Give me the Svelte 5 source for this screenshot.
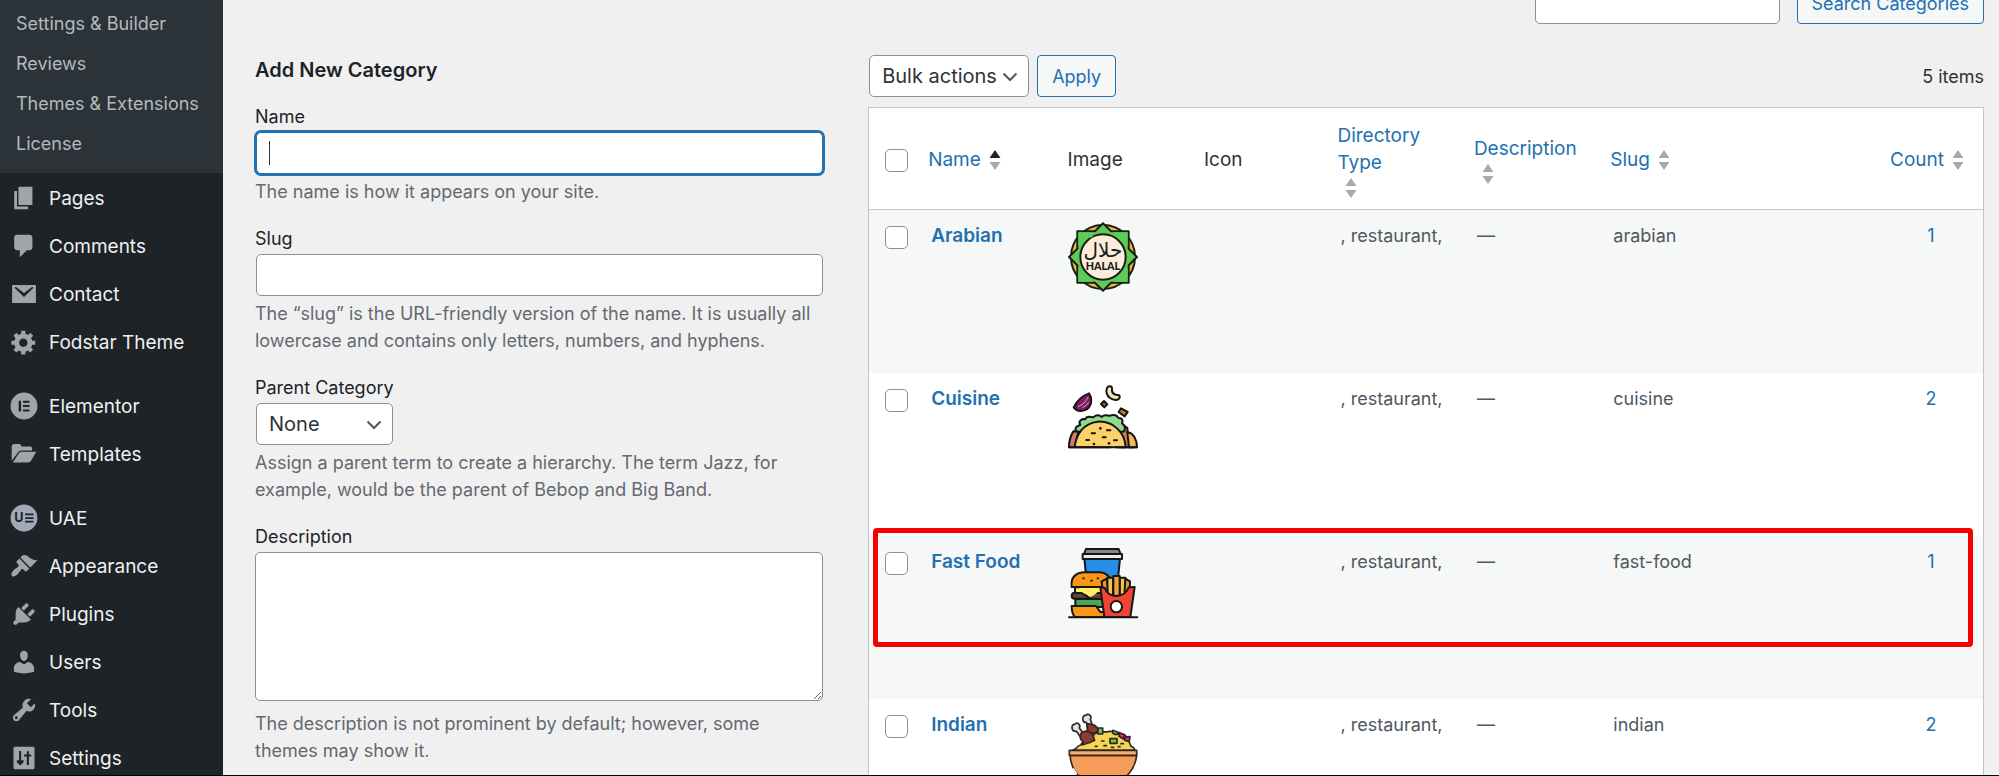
<script lang="ts">
	const submenu = ['Settings & Builder', 'Reviews', 'Themes & Extensions', 'License'];

	const menu = [
		{ label: 'Pages', icon: 'M6 15V2h10v13H6zm-1 1h8v2H3V5h2v11z' },
		{
			label: 'Comments',
			icon: 'M5 2h9c1.1 0 2 .9 2 2v7c0 1.1-.9 2-2 2h-2l-5 5v-5H5c-1.1 0-2-.9-2-2V4c0-1.1.9-2 2-2z'
		},
		{
			label: 'Contact',
			icon: 'M1.5 3.5h17v13h-17zM3.6 5.9l6.4 6.3 6.4-6.3c.5-.6-.3-1.3-.9-.8L10 9.3 4.500 5.100c-.6-.5-1.400.2-.9.8z'
		},
		{
			label: 'Fodstar Theme',
			icon: 'M18 12h-2.180c-.17.7-.44 1.350-.81 1.930l1.540 1.540-2.100 2.100-1.540-1.540c-.58.36-1.230.63-1.910.79V19H8v-2.180c-.68-.16-1.330-.43-1.910-.79l-1.540 1.540-2.120-2.120 1.540-1.540c-.36-.58-.63-1.230-.79-1.910H1V9.030h2.170c.16-.7.44-1.350.8-1.940L2.430 5.550l2.100-2.100 1.540 1.540c.58-.37 1.240-.64 1.930-.81V2h3v2.180c.68.16 1.330.43 1.910.79l1.540-1.540 2.120 2.120-1.540 1.540c.36.59.64 1.240.8 1.940H18V12zm-8.500 1.500c1.660 0 3-1.340 3-3s-1.340-3-3-3-3 1.340-3 3 1.340 3 3 3z'
		},
		{
			label: 'Elementor',
			gap: true,
			icon: 'M10 .4a9.600 9.600 0 1 0 0 19.200 9.600 9.600 0 0 0 0-19.200zM6.200 6.200h1.700v7.800H6.200zM9.300 6.200h4.600v1.500H9.300zM9.300 9.300h4.600v1.500H9.300zM9.300 12.500h4.600V14H9.300z'
		},
		{
			label: 'Templates',
			icon: 'M1.200 14.800V4.600c0-1 .7-1.700 1.700-1.700h3.600c1 0 1.600.7 1.600 1.700h6.200c1 0 1.500.6 1.500 1.600v1.300H8.600c-1.600 0-2.500.6-3.300 1.900zM2 16l4.200-6.300c.6-.9 1.300-1.300 2.400-1.300h10.200l-3.700 6.300c-.5.9-1.200 1.300-2.200 1.300z'
		},
		{
			label: 'UAE',
			gap: true,
			logo: true,
			icon: 'M10 .4a9.600 9.600 0 1 0 0 19.200 9.600 9.600 0 0 0 0-19.200zM10.800 6.800h6v1.300h-6zM10.800 9.400h6v1.300h-6zM10.800 12h6v1.300h-6z'
		},
		{
			label: 'Appearance',
			icon: 'M14.480 11.060L7.410 3.990l1.500-1.500c.5-.56 2.300-.47 3.510.32 1.210.8 1.430 1.280 2.910 2.100 1.180.64 2.450 1.260 4.450.85zm-.71.71L6.700 4.700 4.930 6.470c-.39.39-.39 1.020 0 1.410l1.060 1.060c.39.39.39 1.030 0 1.420-.6.6-1.430 1.110-2.210 1.690-.35.26-.7.53-1.010.84C1.430 14.230.4 16.080 1.400 17.070c.99 1 2.840-.03 4.180-1.360.31-.31.58-.66.85-1.020.57-.78 1.080-1.610 1.690-2.210.39-.39 1.020-.39 1.410 0l1.060 1.060c.39.39 1.020.39 1.410 0z'
		},
		{
			label: 'Plugins',
			icon: 'M13.110 4.360L9.870 7.600 8 5.730l3.240-3.240c.35-.34 1.050-.2 1.560.32.52.51.66 1.210.31 1.550zm-8 1.770l.91-1.120 9.010 9.010-1.190.84c-.71.71-2.630 1.160-3.820 1.160H6.140L4.900 17.260c-.59.59-1.540.59-2.120 0-.59-.58-.59-1.530 0-2.120l1.240-1.240v-3.880c0-1.130.4-3.190 1.090-3.890zm7.260 3.970l3.240-3.240c.34-.35 1.040-.21 1.550.31.52.51.66 1.210.31 1.550l-3.240 3.250z'
		},
		{
			label: 'Users',
			icon: 'M10 9.250c-2.270 0-2.730-3.440-2.730-3.440C7 4.020 7.820 2 9.970 2c2.160 0 2.980 2.020 2.710 3.810 0 0-.41 3.440-2.680 3.440zm0 2.570L12.720 10c2.390 0 4.520 2.330 4.520 4.530v2.490s-3.650 1.130-7.240 1.130c-3.650 0-7.240-1.130-7.240-1.130v-2.490c0-2.250 1.940-4.480 4.470-4.480z'
		},
		{
			label: 'Tools',
			icon: 'M16.680 9.770c-1.340 1.340-3.300 1.670-4.950.99l-5.410 6.520c-.99.99-2.590.99-3.580 0s-.99-2.590 0-3.570l6.520-5.420c-.68-1.650-.35-3.610.99-4.950 1.280-1.280 3.120-1.620 4.720-1.060l-2.890 2.890 2.820 2.820 2.860-2.870c.53 1.580.18 3.390-1.080 4.650zM3.810 16.210c.4.39 1.040.39 1.430 0 .4-.4.4-1.040 0-1.430-.39-.4-1.030-.4-1.430 0-.39.39-.39 1.030 0 1.430z'
		},
		{
			label: 'Settings',
			icon: 'M3.500 2h13c.6 0 1 .4 1 1v14c0 .6-.4 1-1 1h-13c-.6 0-1-.4-1-1V3c0-.6.4-1 1-1zM6.500 5v6.600H4.900V13l2.400 2.400L9.700 13v-1.400H8V5zM12 15h1.500V9h1.700V7.500h-1.700V5.600L12.700 4.600 12 5.600v1.900h-2V9h2z'
		}
	];

	const categories = [
		{ name: 'Arabian', slug: 'arabian', count: 1 },
		{ name: 'Cuisine', slug: 'cuisine', count: 2 },
		{ name: 'Fast Food', slug: 'fast-food', count: 1, marked: true },
		{ name: 'Indian', slug: 'indian', count: 2 }
	];

	let name = $state('');
	let slug = $state('');
	let description = $state('');
	let search = $state('');
	let selected: string[] = $state([]);

	function toggleAll(e: Event) {
		selected = (e.currentTarget as HTMLInputElement).checked ? categories.map((c) => c.slug) : [];
	}
</script>

<svelte:head>
	<title>Categories</title>
</svelte:head>

{#snippet chevron()}
	<svg class="chevron" viewBox="0 0 16 16" aria-hidden="true"><path d="M1.500 4.500 8 11l6.500-6.500" /></svg>
{/snippet}

{#snippet sorter(asc = false)}
	<svg class="sorter" viewBox="0 0 12 20" aria-hidden="true">
		<path class:asc d="M6 0l5.500 8H.5z" />
		<path d="M6 20l5.500-8H.5z" />
	</svg>
{/snippet}

{#snippet picture(slug: string)}
	{#if slug === 'arabian'}
		<svg class="picture" viewBox="54 36 210 210" role="img" aria-label="Halal badge">
			<g stroke="#152018" stroke-width="6" stroke-linejoin="round">
				<circle cx="159" cy="141" r="96" fill="#eeb63a" />
				<path d="M82 64h154v154H82z" fill="#5fcb55" />
				<path d="M159 40l102 101-102 101L57 141z" fill="#5fcb55" />
				<path d="M85 67h148v148H85z" fill="#5fcb55" stroke="none" />
				<circle cx="159" cy="141" r="68" fill="#fdebdc" />
			</g>
			<path d="M119 81l9-6" stroke="#5fcb55" stroke-width="8" />
			<text x="159" y="140" font-size="60" direction="rtl" class="arabic">حلال</text>
			<text x="159" y="181" font-size="32" class="latin">HALAL</text>
		</svg>
	{:else if slug === 'cuisine'}
		<svg class="picture" viewBox="54 30 210 210" role="img" aria-label="Taco">
			<g stroke="#141414" stroke-width="6" stroke-linejoin="round" stroke-linecap="round">
				<path d="M71 97c8-17 25-34 46-42 12 20 8 44-15 51-13 4-25-1-31-9z" fill="#7b1f60" />
				<path d="M85 94c12-3 23-14 29-27M99 97c7-3 13-8 16-14" fill="none" stroke="#e5a9ce" stroke-width="3" />
				<path d="M171 39c5-9 16-6 15 3-1 10 2 15 12 17 8 0 13 3 11 9-4 10-19 8-29 1s-13-20-9-30z" fill="#f5e3bd" />
				<path d="M162 78l10 10-9 9-10-10z" fill="#b45a18" />
				<path d="M213 100l20 11-9 13-18-13z" fill="#e47816" />
				<path d="M197 167c8-16 25-19 35-8l2 20c10 5 16 16 17 38h-44z" fill="#d97869" />
				<path d="M232 172c19 2 29 22 29 45h-24z" fill="#f5b94d" />
				<path d="M78 170c-5-13 4-18 13-20-7-10 2-20 14-17 7-14 19-5 25-6 9-11 21-6 25-1 9-10 20-2 25-4 11-4 22-1 25 7 14 0 14 9 11 16 14 8 8 24 3 25z" fill="#91d98e" />
				<path d="M57 217c0-19 5-36 13-48l15 1-10 47z" fill="#d97869" />
				<path d="M74 217c4-41 29-73 69-77 45-3 82 31 84 77z" fill="#fcd16a" />
				<path d="M57 217h125M198 217h63" fill="none" />
				<path d="M125 175h10M158 187h9M109 195h8M171 166h10M192 196h9" fill="none" />
			</g>
			<g fill="#141414">
				<circle cx="151" cy="160" r="4" />
				<circle cx="132" cy="207" r="4" />
				<circle cx="177" cy="205" r="4" />
			</g>
		</svg>
	{:else if slug === 'fast-food'}
		<svg class="picture" viewBox="54 39 210 210" role="img" aria-label="Burger, drink and fries">
			<g stroke="#171717" stroke-width="6" stroke-linejoin="round" stroke-linecap="round">
				<path d="M103 70h107l-10 100h-87z" fill="#258ee6" />
				<path d="M108 42h98l6 15H102z" fill="#858585" />
				<path d="M98 57h118v15H98z" fill="#ececec" />
				<path d="M65 156c-4-29 13-44 40-44h41c26 0 42 19 37 44z" fill="#fb9614" />
				<path d="M75 157h92v24H75z" fill="#fff067" />
				<path d="M65 183c0-11 9-10 18-9h12l21 13 20-13h28v17H74c-6 0-9-3-9-8z" fill="#67443a" />
				<path d="M86 159h68l-15 16c-8 6-17 15-23 9z" fill="#fff067" stroke="none" />
				<path d="M76 192h88v24H76z" fill="#4aa653" />
				<path d="M65 213h73l13 18h18v15H75c-7-7-10-19-10-33z" fill="#fb9614" />
				<path d="M155 139l15-8 9 60h-18zM240 139l-14-8-11 60h24z" fill="#dc9f2e" />
				<path d="M172 128h17v60h-16zM209 128h17l-3 60h-14z" fill="#fac246" />
				<path d="M190 123h19v67h-19z" fill="#f4a12d" />
				<path d="M151 157l14 2c7 32 61 32 71-2l18-1-13 90h-78z" fill="#f24337" />
				<circle cx="199" cy="215" r="17" fill="#fff" />
				<path d="M57 247h205" fill="none" />
				<path d="M99 130h3M123 137h3M142 130h3" fill="none" stroke-width="5" />
			</g>
		</svg>
	{:else}
		<svg class="picture" viewBox="54 18 210 210" role="img" aria-label="Rice bowl">
			<g stroke="#302724" stroke-width="5" stroke-linejoin="round" stroke-linecap="round">
				<path d="M67 136c13-2 12-13 25-16 5-13 18-12 24-19 12 1 14-17 25-17 13-8 29 0 40-5 12-1 19 11 30 9 13-3 21 9 22 19 9 4 7 13 10 17 9 3 11 8 11 12z" fill="#f5d554" />
				<path d="M110 53c-16 0-14-23-3-22 8-7 20 1 14 12l6 18c13-1 18 12 18 21h-31z" fill="#e2e2e2" />
				<path d="M111 57c17-2 29 6 35 20l-13 8-20-3z" fill="#8b382e" />
				<path d="M79 79c-17 1-16-22-5-21 7-9 20 1 14 11l13 17-10 9z" fill="#e2e2e2" />
				<path d="M93 85c17-16 36-1 41 21-10 1-12 9-20 8l-17 6 3-11c-8-1-13-13-7-24z" fill="#8b3d31" />
				<path d="M144 69h14v18h-14z" fill="#71c750" />
				<path d="M180 101h21v14h-21z" fill="#71c750" />
				<path d="M188 76l20 7-10 6-10-4z" fill="#71c750" />
				<path d="M209 83l16 7-5 12-13-8zM224 96l16-1-2 14-14-3z" fill="#ef237f" />
				<path d="M60 151c3 28 11 48 28 64 16 16 125 16 140 0 17-16 29-37 32-64z" fill="#f59c58" />
				<path d="M58 136h202v15H58z" fill="#f9ad6b" />
				<path d="M155 108h7M162 122h7M184 127h7M205 125h5M136 124h5M213 116h7" fill="none" />
			</g>
			<path d="M69 190l11 18" stroke="#fff" stroke-width="5" />
		</svg>
	{/if}
{/snippet}

<div class="page">
	<nav class="sidebar" aria-label="Main menu">
		<ul class="submenu">
			{#each submenu as item}
				<li><a href="#top">{item}</a></li>
			{/each}
		</ul>
		<ul class="menu">
			{#each menu as item}
				<li class:gap={item.gap}>
					<a href="#top">
						<svg class="icon" class:logo={item.logo} viewBox="0 0 20 20" aria-hidden="true">
							<path fill-rule="evenodd" d={item.icon} />
							{#if item.logo}<text x="3" y="13" font-size="9">U</text>{/if}
						</svg>
						{item.label}
					</a>
				</li>
			{/each}
		</ul>
	</nav>

	<main class="content">
		<section class="col-left">
			<h2>Add New Category</h2>
			<form>
				<div class="field">
					<label for="tag-name">Name</label>
					<div class="control">
						<input id="tag-name" class="active" type="text" bind:value={name} />
						<span class="caret"></span>
					</div>
					<p>The name is how it appears on your site.</p>
				</div>
				<div class="field">
					<label for="tag-slug">Slug</label>
					<div class="control">
						<input id="tag-slug" type="text" bind:value={slug} />
					</div>
					<p>
						The “slug” is the URL-friendly version of the name. It is usually all lowercase and contains
						only letters, numbers, and hyphens.
					</p>
				</div>
				<div class="field">
					<label for="parent">Parent Category</label>
					<div class="control">
						<span class="select parent">
							<select id="parent"><option>None</option></select>
							{@render chevron()}
						</span>
					</div>
					<p>
						Assign a parent term to create a hierarchy. The term Jazz, for example, would be the parent
						of Bebop and Big Band.
					</p>
				</div>
				<div class="field">
					<label for="tag-description">Description</label>
					<textarea id="tag-description" bind:value={description}></textarea>
					<p>The description is not prominent by default; however, some themes may show it.</p>
				</div>
			</form>
		</section>

		<section class="col-right">
			<form class="search">
				<input type="search" aria-label="Search Categories" bind:value={search} />
				<button type="button" class="button">Search Categories</button>
			</form>

			<div class="tablenav">
				<span class="select bulk">
					<select aria-label="Select bulk action"><option>Bulk actions</option></select>
					{@render chevron()}
				</span>
				<button type="button" class="button">Apply</button>
				<span class="total">5 items</span>
			</div>

			<table>
				<colgroup>
					<col class="c-check" />
					<col class="c-col" />
					<col class="c-col" />
					<col class="c-col" />
					<col class="c-col" />
					<col class="c-col" />
					<col />
					<col class="c-count" />
				</colgroup>
				<thead>
					<tr>
						<td class="check"><input type="checkbox" aria-label="Select All" onchange={toggleAll} /></td>
						<th class="sortable"><a href="#top"><span>Name</span>{@render sorter(true)}</a></th>
						<th>Image</th>
						<th>Icon</th>
						<th class="sortable"><a href="#top"><span>Directory Type</span>{@render sorter()}</a></th>
						<th class="sortable"><a href="#top"><span>Description</span>{@render sorter()}</a></th>
						<th class="sortable"><a href="#top"><span>Slug</span>{@render sorter()}</a></th>
						<th class="sortable"><a href="#top"><span>Count</span>{@render sorter()}</a></th>
					</tr>
				</thead>
				<tbody>
					{#each categories as cat}
						<tr>
							<td class="check">
								<input
									type="checkbox"
									aria-label="Select {cat.name}"
									value={cat.slug}
									bind:group={selected}
								/>
								{#if cat.marked}<span class="marker"></span>{/if}
							</td>
							<td><a class="row-title" href="#top">{cat.name}</a></td>
							<td>{@render picture(cat.slug)}</td>
							<td></td>
							<td>, restaurant,</td>
							<td>—</td>
							<td>{cat.slug}</td>
							<td class="count"><a href="#top">{cat.count}</a></td>
						</tr>
					{/each}
				</tbody>
			</table>
		</section>
	</main>
</div>

<style>
	:global(body) {
		background: #f0f0f1;
	}
	.page {
		display: flex;
		box-sizing: border-box;
		height: 100vh;
		overflow: hidden;
		border-bottom: 1px solid #000;
		background: #f0f0f1;
		color: #2c3338;
		font-family: Inter, 'Open Sans', sans-serif;
		font-size: 18px;
		line-height: 27px;
	}
	.page :global(*) {
		box-sizing: border-box;
	}
	a {
		color: #2271b1;
		text-decoration: none;
	}
	ul {
		margin: 0;
		padding: 0;
		list-style: none;
	}

	/* sidebar */
	.sidebar {
		flex: 0 0 223px;
		background: #1d2327;
	}
	.submenu {
		padding: 4px 0 9px;
		background: #2c3338;
	}
	.submenu a {
		display: block;
		padding-left: 16px;
		color: #b4b9be;
		line-height: 40px;
	}
	.menu {
		padding-top: 1px;
	}
	.menu .gap {
		margin-top: 16px;
	}
	.menu a {
		display: flex;
		align-items: center;
		gap: 11px;
		height: 48px;
		padding-left: 10px;
		color: #f0f0f1;
		font-size: 19px;
	}
	.icon {
		width: 28px;
		height: 28px;
		fill: #a0a5aa;
	}
	.icon.logo {
		fill: #a3a8b8;
	}
	.icon text {
		fill: #1d2327;
		font-weight: 700;
	}

	/* content */
	.content {
		display: flex;
		flex: 1;
		min-width: 0;
		padding: 0 15px 0 32px;
	}
	.col-left {
		flex: 0 0 35%;
		padding: 56px 37px 0 0;
	}
	.col-right {
		flex: 1;
		min-width: 0;
		padding-left: 8px;
	}
	h2 {
		margin: 0 0 19px;
		color: #1d2327;
		font-size: 20px;
		font-weight: 600;
		line-height: 28px;
	}
	.field {
		margin-bottom: 20px;
	}
	label {
		display: block;
		margin-bottom: 1px;
		color: #1d2327;
		line-height: 28px;
	}
	.control {
		position: relative;
		padding-left: 1px;
	}
	.field p {
		margin: 4px 0 0;
		color: #646970;
	}
	input[type='text'],
	input[type='search'],
	textarea,
	select {
		display: block;
		margin: 0;
		border: 1px solid #8c8f94;
		border-radius: 5px;
		background: #fff;
		color: #2c3338;
		font: inherit;
	}
	input[type='text'] {
		width: 100%;
		height: 42px;
		padding: 0 12px;
	}
	input.active {
		border-color: #2271b1;
		outline: none;
		box-shadow: 0 0 0 2px #2271b1;
	}
	.caret {
		position: absolute;
		top: 9px;
		left: 14px;
		width: 1px;
		height: 24px;
		background: #2c3338;
	}
	textarea {
		width: 100%;
		height: 149px;
		padding: 4px 12px;
	}
	.field textarea + p {
		margin-top: 9px;
	}
	.select {
		position: relative;
		display: block;
	}
	.select select {
		width: 100%;
		height: 42px;
		padding: 0 12px;
		appearance: none;
		font-size: 20px;
	}
	.parent {
		width: 137px;
	}
	.bulk {
		width: 160px;
	}
	.chevron {
		position: absolute;
		top: 14px;
		right: 11px;
		width: 16px;
		height: 16px;
		fill: none;
		stroke: #50575e;
		stroke-width: 2;
		pointer-events: none;
	}
	.button {
		height: 42px;
		padding: 0 14px;
		border: 1px solid #2271b1;
		border-radius: 4px;
		background: #f6f7f7;
		color: #2271b1;
		font: inherit;
	}
	.search {
		display: flex;
		justify-content: flex-end;
		gap: 17px;
		margin-top: -18px;
	}
	.search input {
		width: 245px;
		height: 42px;
	}
	.tablenav {
		display: flex;
		align-items: center;
		gap: 8px;
		margin: 31px 0 10px;
		padding-left: 1px;
	}
	.total {
		margin-left: auto;
	}

	/* category list */
	table {
		width: 100%;
		table-layout: fixed;
		border: 1px solid #c3c4c7;
		border-collapse: separate;
		border-spacing: 0;
		background: #fff;
	}
	.c-check {
		width: 48px;
	}
	.c-col {
		width: 12.25%;
	}
	.c-count {
		width: 104px;
	}
	thead th,
	thead td {
		height: 102px;
		padding: 2px 14px 0;
		border-bottom: 1px solid #c3c4c7;
		font-size: 19px;
		font-weight: 400;
		text-align: left;
		vertical-align: middle;
	}
	thead th.sortable {
		padding: 2px 8px 0 11px;
	}
	th a {
		display: flex;
		flex-wrap: wrap;
		align-items: center;
		row-gap: 2px;
	}
	.sorter {
		width: 12px;
		height: 20px;
		margin-left: 8px;
		fill: #a7aaad;
	}
	.sorter .asc {
		fill: #1d2327;
	}
	tbody tr {
		position: relative;
	}
	tbody tr:nth-child(odd) {
		background: #f6f7f7;
	}
	tbody td {
		height: 163px;
		padding: 12px 14px;
		color: #50575e;
		vertical-align: top;
	}
	.page td.check {
		padding: 16px 0 0 16px;
	}
	.page thead td.check {
		padding-top: 4px;
	}
	input[type='checkbox'] {
		display: block;
		width: 23px;
		height: 23px;
		margin: 0;
		border: 1px solid #8c8f94;
		border-radius: 5px;
		appearance: none;
		background: #fff;
	}
	input[type='checkbox']:checked {
		background: #2271b1;
	}
	.row-title {
		font-size: 19px;
		font-weight: 600;
	}
	.count {
		text-align: center;
	}
	.picture {
		display: block;
		width: 70px;
		height: 70px;
		overflow: visible;
	}
	.picture text {
		fill: #152018;
		text-anchor: middle;
	}
	.latin {
		font-family: Lato, sans-serif;
		font-weight: 900;
	}
	.arabic {
		font-family: 'DejaVu Sans', sans-serif;
	}
	.marker {
		position: absolute;
		z-index: 1;
		top: -8px;
		right: 10px;
		left: 4px;
		height: 119px;
		border: 5px solid #f60000;
		border-radius: 4px;
		pointer-events: none;
	}
</style>
